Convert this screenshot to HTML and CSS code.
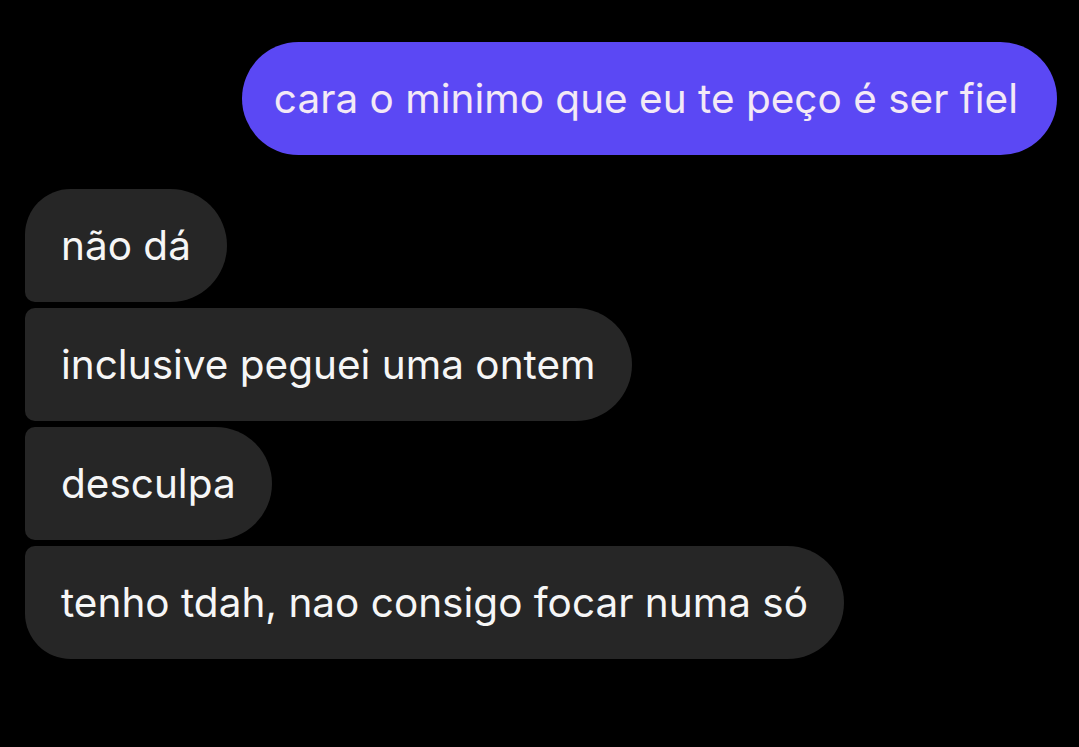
FILE: index.html
```html
<!DOCTYPE html>
<html lang="pt">
<head>
<meta charset="utf-8">
<title>Chat</title>
<link rel="stylesheet" href="styles.css">
</head>
<body>
<div class="chat">
  <div class="bubble sent">cara o minimo que eu te peço é ser fiel</div>
  <div class="group">
    <div class="bubble recv first">não dá</div>
    <div class="bubble recv mid">inclusive peguei uma ontem</div>
    <div class="bubble recv mid">desculpa</div>
    <div class="bubble recv last">tenho tdah, nao consigo focar numa só</div>
  </div>
</div>
</body>
</html>
```

FILE: styles.css
```css
html, body {
  margin: 0;
  padding: 0;
  background: #000;
  height: 100%;
}
.chat {
  display: flex;
  flex-direction: column;
  padding: 42px 22px 0 25px;
  font-family: Inter, "Liberation Sans", sans-serif;
  font-size: 40.5px;
}
.group {
  display: flex;
  flex-direction: column;
  align-items: flex-start;
  gap: 6px;
  margin-top: 34px;
}
.bubble {
  line-height: 51px;
  padding: 31px 39px 31px 35px;
  white-space: nowrap;
}
.sent {
  align-self: flex-end;
  background: #5b48f4;
  color: #f3e9f6;
  border-radius: 57px;
  padding-left: 32px;
}
.recv {
  background: #262626;
  color: #f6f6f6;
  padding-left: 36px;
  padding-right: 36px;
}
.first { border-radius: 46px 57px 57px 10px; }
.mid { border-radius: 10px 57px 57px 10px; }
.last { border-radius: 10px 57px 57px 46px; }
```
